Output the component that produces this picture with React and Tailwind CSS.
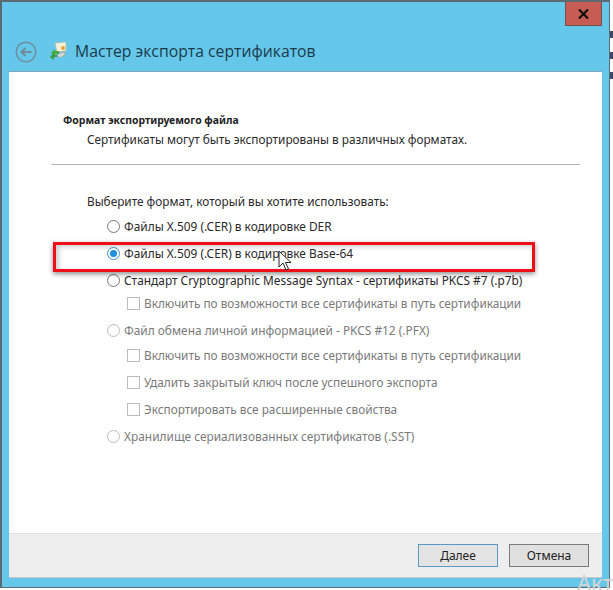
const textFont = "font-['Noto_Sans',sans-serif]"

function Radio({ checked, disabled }) {
  if (checked) {
    return (
      <span className="flex h-[13px] w-[13px] shrink-0 items-center justify-center rounded-full border border-[#3c9ad8] bg-white">
        <span className="h-[7px] w-[7px] rounded-full bg-[#1f90dc]" />
      </span>
    )
  }
  return (
    <span className={`h-[13px] w-[13px] shrink-0 rounded-full border bg-white ${disabled ? 'border-[#bcbcbc]' : 'border-[#777777]'}`} />
  )
}

function RadioRow({ label, checked, disabled, className }) {
  return (
    <div className={`flex h-[27px] items-center gap-[4px] pl-[98px] ${className || ''}`}>
      <Radio checked={checked} disabled={disabled} />
      <span className={`whitespace-nowrap text-[11.9px] ${disabled ? 'text-[#7a7a7a]' : 'text-[#2a2a2a]'}`}>{label}</span>
    </div>
  )
}

function CheckRow({ label, className }) {
  return (
    <div className={`flex h-[27px] items-center gap-[4px] pl-[118px] ${className || ''}`}>
      <span className="h-[13px] w-[13px] shrink-0 border border-[#bcbcbc] bg-white" />
      <span className="whitespace-nowrap text-[11.8px] text-[#7a7a7a]">{label}</span>
    </div>
  )
}

function WizardIcon() {
  return (
    <svg width="17" height="18" viewBox="0 0 17 18">
      <path d="M5 1 L16 0 L16 9 L7 10 Z" fill="#f4f0dc" stroke="#b9b39a" strokeWidth="0.6" />
      <circle cx="13" cy="6" r="2" fill="#e9a33c" />
      <path d="M1 11 L5 7 L5 9 L9 9 L9 12 L5 12 L5 14 Z" fill="#4aa83c" />
      <path d="M0 15 L4 11 L4 13 L7 13 L7 15 L4 15 L4 18 Z" fill="#3b9a3a" />
      <path d="M7 13 L13 10 L16 12 L10 16 Z" fill="#d8d8d8" stroke="#8f8f8f" strokeWidth="0.6" />
    </svg>
  )
}

function BackIcon() {
  return (
    <svg width="22" height="22" viewBox="0 0 22 22" fill="none" stroke="#6f8d9b">
      <circle cx="11" cy="11" r="9.8" strokeWidth="1.4" />
      <path d="M16.5 11 H6.5 M10.5 7 L6.5 11 L10.5 15" strokeWidth="2" />
    </svg>
  )
}

function Cursor() {
  return (
    <svg className="absolute left-[278px] top-[250px]" width="14" height="22" viewBox="0 0 14 22">
      <path d="M1 1 L1 17 L5 13 L8 20 L10.5 19 L7.5 12.5 L13 12.5 Z" fill="#ffffff" stroke="#222222" strokeWidth="1" />
    </svg>
  )
}

export default function App() {
  return (
    <div className={`relative h-[590px] w-[613px] overflow-hidden bg-white ${textFont}`}>
      <div className="relative flex h-[588px] w-[610px] flex-col border border-[#5c6a72] border-l-2 border-t-2 bg-[#65c8ea] pb-[9px] pl-[7px] pr-[7px]">
        {/* Close button */}
        <div className="absolute right-[7px] top-0 flex h-[24px] w-[37px] items-center justify-center border border-[#7a4f4c] border-t-0 bg-[#c75c52]">
          <svg width="11" height="10" viewBox="0 0 11 10" stroke="#111111" strokeWidth="2.2">
            <path d="M1 0.5 L10 9.5 M10 0.5 L1 9.5" />
          </svg>
        </div>

        {/* Title bar */}
        <div className="flex h-[69px] shrink-0 items-start pl-[6px] pt-[39px]">
          <BackIcon />
          <span className="ml-[13px] mt-[1px]"><WizardIcon /></span>
          <span className="ml-[8px] whitespace-nowrap font-['Open_Sans',sans-serif] text-[15.75px] leading-[20px] text-[#1c3a4a]">
            Мастер экспорта сертификатов
          </span>
        </div>

        {/* Page content */}
        <div className="flex min-h-0 flex-1 flex-col border-t border-t-[#7fa8c0] bg-white">
          <div className="flex-1">
            <div className="pl-[54px] pt-[41px] text-[10.4px] font-bold leading-[14px] text-[#222222]">
              Формат экспортируемого файла
            </div>
            <div className="pl-[78px] pt-[3px] text-[11.8px] leading-[18px] text-[#2a2a2a]">
              Сертификаты могут быть экспортированы в различных форматах.
            </div>
            <div className="ml-[42px] mr-[22px] mt-[16px] h-px bg-[#b4b4b4]" />
            <div className="pl-[78px] pt-[27px] text-[11.8px] leading-[18px] text-[#2a2a2a]">
              Выберите формат, который вы хотите использовать:
            </div>
            <div className="pt-[3px]">
              <RadioRow label="Файлы X.509 (.CER) в кодировке DER" />
              <RadioRow label="Файлы X.509 (.CER) в кодировке Base-64" checked />
              <RadioRow label="Стандарт Cryptographic Message Syntax - сертификаты PKCS #7 (.p7b)" />
              <CheckRow label="Включить по возможности все сертификаты в путь сертификации" className="-mt-[4px]" />
              <RadioRow label="Файл обмена личной информацией - PKCS #12 (.PFX)" disabled />
              <CheckRow label="Включить по возможности все сертификаты в путь сертификации" className="-mt-[2px]" />
              <CheckRow label="Удалить закрытый ключ после успешного экспорта" />
              <CheckRow label="Экспортировать все расширенные свойства" />
              <RadioRow label="Хранилище сериализованных сертификатов (.SST)" disabled />
            </div>
          </div>

          {/* Footer buttons */}
          <div className="flex h-[45px] shrink-0 items-center justify-end gap-[11px] border-b border-t border-b-[#c8c8c8] border-t-[#e2e2e2] bg-[#eeeeee] pr-[13px]">
            <button className="h-[23px] w-[80px] border border-[#5a9ac8] bg-[#e4e4e4] text-[12px] text-[#222222]">Далее</button>
            <button className="h-[23px] w-[80px] border border-[#7a7a7a] bg-[#e0e0e0] text-[12px] text-[#222222]">Отмена</button>
          </div>
        </div>
      </div>

      {/* Annotation over the screenshot */}
      <div className="absolute left-[53px] top-[242px] h-[30px] w-[482px] border-[3px] border-[#ef0f18] shadow-[0_2px_5px_rgba(0,0,0,0.45),inset_3px_2px_5px_rgba(0,0,0,0.2)]" />
      <Cursor />

      {/* Watermark cut off by the corner */}
      <span className="absolute left-[577px] top-[570px] whitespace-nowrap text-[22px] leading-[24px] text-[#d4d4d4]">Акт</span>

      {/* Bits of the page behind the window */}
      <div className="absolute left-[610px] top-[31px] flex h-[48px] w-[3px] flex-col justify-between">
        <span className="h-[7px] w-[3px] bg-[#3a4a6a]" />
        <span className="h-[7px] w-[3px] bg-[#3a4a6a]" />
        <span className="h-[7px] w-[3px] bg-[#3a4a6a]" />
      </div>
    </div>
  )
}
